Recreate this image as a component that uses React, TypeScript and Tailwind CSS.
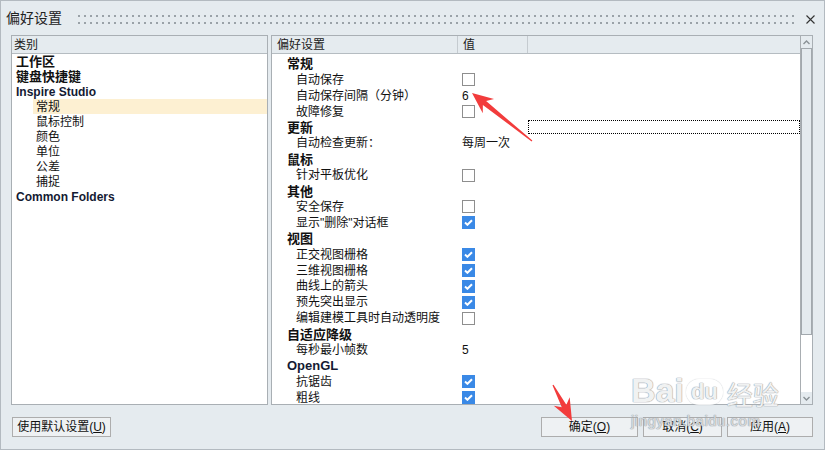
import React from "react";

type Row = { t: string; cat?: boolean; v?: "on" | "off" | string; focus?: boolean };

const ROWS: Row[] = [
  { t: "常规", cat: true },
  { t: "自动保存", v: "off" },
  { t: "自动保存间隔（分钟）", v: "6" },
  { t: "故障修复", v: "off" },
  { t: "更新", cat: true, focus: true },
  { t: "自动检查更新：", v: "每周一次" },
  { t: "鼠标", cat: true },
  { t: "针对平板优化", v: "off" },
  { t: "其他", cat: true },
  { t: "安全保存", v: "off" },
  { t: '显示"删除"对话框', v: "on" },
  { t: "视图", cat: true },
  { t: "正交视图栅格", v: "on" },
  { t: "三维视图栅格", v: "on" },
  { t: "曲线上的箭头", v: "on" },
  { t: "预先突出显示", v: "on" },
  { t: "编辑建模工具时自动透明度", v: "off" },
  { t: "自适应降级", cat: true },
  { t: "每秒最小帧数", v: "5" },
  { t: "OpenGL", cat: true },
  { t: "抗锯齿", v: "on" },
  { t: "粗线", v: "on" },
];

const TREE = [
  { t: "工作区", lvl: 0, cjk: true },
  { t: "键盘快捷键", lvl: 0, cjk: true },
  { t: "Inspire Studio", lvl: 0 },
  { t: "常规", lvl: 1, sel: true },
  { t: "鼠标控制", lvl: 1 },
  { t: "颜色", lvl: 1 },
  { t: "单位", lvl: 1 },
  { t: "公差", lvl: 1 },
  { t: "捕捉", lvl: 1 },
  { t: "Common Folders", lvl: 0 },
];

function Check({ on }: { on: boolean }) {
  if (!on) return <div className="w-[13px] h-[13px] border border-[#8e8e8e] bg-white" />;
  return (
    <div className="w-[13px] h-[13px] bg-[#3a89e6] flex items-center justify-center">
      <svg width="9" height="7" viewBox="0 0 9 7">
        <path d="M1 3.6 L3.4 5.8 L8 1.2" fill="none" stroke="#fff" strokeWidth="2" />
      </svg>
    </div>
  );
}

// arrow polygon from tail (tx,ty) to tip (px,py)
function arrow(tx: number, ty: number, px: number, py: number, L: number, W: number) {
  const dx = px - tx;
  const dy = py - ty;
  const len = Math.hypot(dx, dy);
  const ux = dx / len;
  const uy = dy / len;
  const nx = -uy;
  const ny = ux;
  const bx = px - ux * L;
  const by = py - uy * L;
  const cx = px - ux * (L - 5);
  const cy = py - uy * (L - 5);
  const pts = [
    [tx + nx * 0.6, ty + ny * 0.6],
    [cx + nx * 2.6, cy + ny * 2.6],
    [bx + nx * W, by + ny * W],
    [px, py],
    [bx - nx * W, by - ny * W],
    [cx - nx * 2.6, cy - ny * 2.6],
    [tx - nx * 0.6, ty - ny * 0.6],
  ];
  return pts.map((p) => p.join(",")).join(" ");
}

function Btn({ label, k, w }: { label: string; k: string; w: string }) {
  return (
    <div className={`${w} h-[20px] border border-[#adadad] bg-[#eef1f3] flex items-center justify-center text-[12px] text-[#111]`}>
      {label}(<span className="underline">{k}</span>)
    </div>
  );
}

export default function App() {
  return (
    <div className="relative w-[825px] h-[450px] bg-[#e5ebef] border border-[#b3bac0] font-['Liberation_Sans','Noto_Sans_CJK_SC',sans-serif] text-[#111] overflow-hidden">
      {/* title bar */}
      <div className="h-[34px] flex items-center pl-[5px] pr-[9px]">
        <span className="text-[14px] text-[#222] leading-none">偏好设置</span>
        <div className="flex-1 ml-[16px] mr-[10px] flex flex-col gap-[5px] mt-[2px]">
          <div className="h-[2px] bg-[repeating-linear-gradient(90deg,#9aa2a8_0_2px,transparent_2px_6px)]" />
          <div className="h-[2px] bg-[repeating-linear-gradient(90deg,#9aa2a8_0_2px,transparent_2px_6px)]" />
        </div>
        <svg width="9" height="9" viewBox="0 0 9 9" className="mt-[2px]">
          <path d="M0.5 0.5 L8.5 8.5 M8.5 0.5 L0.5 8.5" stroke="#333" strokeWidth="1.1" />
        </svg>
      </div>

      {/* panels */}
      <div className="flex gap-[3px] pl-[10px] pr-[11px] h-[370px]">
        {/* left tree */}
        <div className="w-[257px] border border-[#a9afb4] bg-white flex flex-col">
          <div className="h-[18px] bg-[#e5ebef] border-b border-[#b5bcc1] flex items-center pl-[2px] text-[12px] text-[#222]">类别</div>
          <div className="flex flex-col">
            {TREE.map((n) => (
              <div key={n.t} className={`h-[15px] flex items-center ${n.lvl ? "ml-[21px] pl-[3px]" : "pl-[4px]"} ${n.sel ? "bg-[#fdf0d2]" : ""}`}>
                <span className={`leading-none ${n.lvl ? "text-[12px]" : n.cjk ? "text-[13px] font-bold" : "text-[12px] font-bold text-[#141a33]"}`}>{n.t}</span>
              </div>
            ))}
          </div>
        </div>

        {/* right grid */}
        <div className="flex-1 border border-[#a9afb4] bg-white flex">
          <div className="flex-1 flex flex-col overflow-hidden">
            <div className="h-[18px] shrink-0 bg-[#e5ebef] border-b border-[#b5bcc1] flex text-[12px] text-[#222]">
              <div className="w-[186px] border-r border-[#c5cbd0] flex items-center pl-[5px]">偏好设置</div>
              <div className="w-[70px] border-r border-[#c5cbd0] flex items-center pl-[5px]">值</div>
              <div className="flex-1" />
            </div>
            <div className="pt-[2px] flex flex-col">
              {ROWS.map((r) => (
                <div key={r.t} className="h-[15.9px] shrink-0 flex items-stretch">
                  <div className={`w-[186px] flex items-center ${r.cat ? "pl-[15px]" : "pl-[24px]"}`}>
                    <span className={`leading-none ${r.cat ? (r.t === "OpenGL" ? "text-[13px] font-bold text-[#141a33]" : "text-[13px] font-bold") : "text-[12px]"}`}>{r.t}</span>
                  </div>
                  <div className="w-[70px] flex items-center pl-[4px] text-[12px]">
                    {r.v === "on" && <Check on />}
                    {r.v === "off" && <Check on={false} />}
                    {r.v && r.v !== "on" && r.v !== "off" && <span className="leading-none">{r.v}</span>}
                  </div>
                  <div className="flex-1 pb-[1px]">
                    {r.focus && <div className="h-full border border-dotted border-black" />}
                  </div>
                </div>
              ))}
            </div>
          </div>
          {/* scrollbar */}
          <div className="w-[12px] border-l border-[#a9aeb2] flex flex-col">
            <div className="h-[12px] bg-[#e5ebef] flex items-center justify-center">
              <svg width="7" height="5" viewBox="0 0 7 5"><path d="M0.5 4 L3.5 1 L6.5 4" fill="none" stroke="#8a9196" strokeWidth="1.4" /></svg>
            </div>
            <div className="h-[287px] bg-[#e4eaee] border border-[#a2a8ad]" />
            <div className="flex-1 bg-white" />
            <div className="h-[12px] bg-[#e5ebef] flex items-center justify-center">
              <svg width="7" height="5" viewBox="0 0 7 5"><path d="M0.5 1 L3.5 4 L6.5 1" fill="none" stroke="#8a9196" strokeWidth="1.4" /></svg>
            </div>
          </div>
        </div>
      </div>

      {/* buttons */}
      <div className="flex items-start pl-[11px] pr-[11px] pt-[12px]">
        <div className="w-[99px] h-[20px] border border-[#adadad] bg-[#eef1f3] flex items-center justify-center text-[12px]">
          使用默认设置(<span className="underline">U</span>)
        </div>
        <div className="flex-1" />
        <div className="flex gap-[5px]">
          <Btn label="确定" k="O" w="w-[97px]" />
          <Btn label="取消" k="C" w="w-[79px]" />
          <Btn label="应用" k="A" w="w-[86px]" />
        </div>
      </div>

      {/* watermark */}
      <div className="absolute left-[630px] top-[372px] pointer-events-none select-none flex flex-col items-start text-white/85 [text-shadow:0_0_1px_#9ea5ab,0_0_1px_#9ea5ab,0_0_1px_#9ea5ab]">
        <div className="flex items-end leading-none">
          <span className="text-[34px] font-bold font-['Liberation_Sans',sans-serif]">Bai</span>
          <span className="ml-[2px] mb-[2px] text-[22px] font-bold rounded-full px-[3px] border-2 border-white/80 [box-shadow:0_0_1px_#9ea5ab]">du</span>
          <span className="ml-[4px] text-[26px] font-['Noto_Sans_CJK_SC',sans-serif]">经验</span>
        </div>
        <span className="mt-[6px] text-[15px] tracking-[0.5px] leading-none text-white/60">jingyan.baidu.com</span>
      </div>

      {/* red arrows */}
      <svg className="absolute left-0 top-0 pointer-events-none" width="825" height="450">
        <polygon points={arrow(531, 140, 471, 92, 21, 9)} fill="#f23c3c" />
        <polygon points={arrow(552, 384, 571, 420, 22, 9)} fill="#f23c3c" />
      </svg>
    </div>
  );
}
